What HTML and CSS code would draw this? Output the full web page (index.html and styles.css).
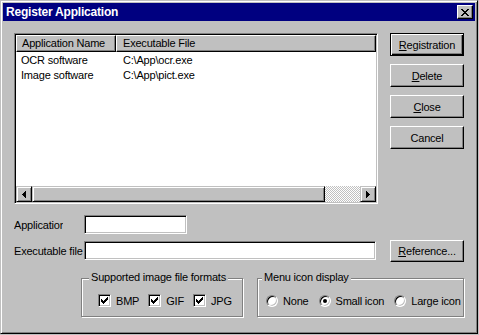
FILE: index.html
```html
<!DOCTYPE html>
<html>
<head>
<meta charset="utf-8">
<link rel="stylesheet" href="styles.css">
</head>
<body>
<div class="window">
  <div class="titlebar">
    <span class="title">Register Application</span>
    <button class="close-btn"><svg width="8" height="7" viewBox="0 0 8 7" shape-rendering="crispEdges"><path d="M0 0h2v1H0z M6 0h2v1H6z M1 1h2v1H1z M5 1h2v1H5z M2 2h4v1H2z M3 3h2v1H3z M2 4h4v1H2z M1 5h2v1H1z M5 5h2v1H5z M0 6h2v1H0z M6 6h2v1H6z" fill="#000"/></svg></button>
  </div>
  <div class="content">
    <div class="top-row">
      <div class="listview">
        <div class="lv-header">
          <div class="lv-col col-name">Application Name</div>
          <div class="lv-col col-file">Executable File</div>
        </div>
        <div class="lv-body">
          <div class="lv-row"><span class="cell-name">OCR software</span><span class="cell-file">C:\App\ocr.exe</span></div>
          <div class="lv-row"><span class="cell-name">Image software</span><span class="cell-file">C:\App\pict.exe</span></div>
        </div>
        <div class="hscroll">
          <div class="sb-btn"><svg width="4" height="7" viewBox="0 0 4 7" shape-rendering="crispEdges"><path d="M3 0h1v7H3z M2 1h1v5H2z M1 2h1v3H1z M0 3h1v1H0z" fill="#000"/></svg></div>
          <div class="sb-thumb"></div>
          <div class="sb-track"><svg width="100%" height="100%"><defs><pattern id="chk" width="2" height="2" patternUnits="userSpaceOnUse"><rect width="2" height="2" fill="#c0c0c0"/><rect width="1" height="1" fill="#fff"/><rect x="1" y="1" width="1" height="1" fill="#fff"/></pattern></defs><rect width="100%" height="100%" fill="url(#chk)"/></svg></div>
          <div class="sb-btn"><svg width="4" height="7" viewBox="0 0 4 7" shape-rendering="crispEdges"><path d="M0 0h1v7H0z M1 1h1v5H1z M2 2h1v3H2z M3 3h1v1H3z" fill="#000"/></svg></div>
        </div>
      </div>
      <div class="side-buttons">
        <button class="btn default"><u>R</u>egistration</button>
        <button class="btn"><u>D</u>elete</button>
        <button class="btn"><u>C</u>lose</button>
        <button class="btn">Cancel</button>
      </div>
    </div>
    <div class="form-row row-app">
      <span class="field-label label-clip">Application</span>
      <div class="field field-app"></div>
    </div>
    <div class="form-row row-exec">
      <span class="field-label">Executable file</span>
      <div class="field field-exec"></div>
      <button class="btn btn-ref"><u>R</u>eference...</button>
    </div>
    <div class="groups">
      <div class="group group-formats">
        <span class="group-label">Supported image file formats</span>
        <div class="options">
          <span class="opt"><span class="checkbox"><svg width="7" height="7" viewBox="0 0 7 7" shape-rendering="crispEdges"><path d="M6 0h1v1H6z M5 1h2v1H5z M0 2h1v1H0z M4 2h3v1H4z M0 3h2v1H0z M3 3h3v1H3z M0 4h5v1H0z M1 5h3v1H1z M2 6h1v1H2z" fill="#000"/></svg></span>BMP</span>
          <span class="opt"><span class="checkbox"><svg width="7" height="7" viewBox="0 0 7 7" shape-rendering="crispEdges"><path d="M6 0h1v1H6z M5 1h2v1H5z M0 2h1v1H0z M4 2h3v1H4z M0 3h2v1H0z M3 3h3v1H3z M0 4h5v1H0z M1 5h3v1H1z M2 6h1v1H2z" fill="#000"/></svg></span>GIF</span>
          <span class="opt"><span class="checkbox"><svg width="7" height="7" viewBox="0 0 7 7" shape-rendering="crispEdges"><path d="M6 0h1v1H6z M5 1h2v1H5z M0 2h1v1H0z M4 2h3v1H4z M0 3h2v1H0z M3 3h3v1H3z M0 4h5v1H0z M1 5h3v1H1z M2 6h1v1H2z" fill="#000"/></svg></span>JPG</span>
        </div>
      </div>
      <div class="group group-icons">
        <span class="group-label">Menu icon display</span>
        <div class="options">
          <span class="opt"><span class="radio"></span>None</span>
          <span class="opt"><span class="radio checked"></span>Small icon</span>
          <span class="opt"><span class="radio"></span>Large icon</span>
        </div>
      </div>
    </div>
  </div>
</div>
</body>
</html>
```
FILE: styles.css
```css
body {
  margin: 0;
  background: #c0c0c0;
  font-family: "Liberation Sans", Arial, sans-serif;
  font-size: 11px;
  letter-spacing: -0.2px;
  color: #000;
}

.window {
  width: 478px;
  height: 334px;
  box-sizing: border-box;
  border: 1px solid;
  border-color: #c0c0c0 #000 #000 #c0c0c0;
  box-shadow: inset 1px 1px #fff, inset -1px -1px #808080;
  padding: 2px;
}

.titlebar {
  height: 18px;
  background: #000080;
  color: #fff;
  display: flex;
  align-items: center;
  justify-content: space-between;
  padding: 0 2px 0 3px;
  font-weight: bold;
  font-size: 12px;
}

.close-btn {
  width: 16px;
  height: 14px;
  box-sizing: border-box;
  padding: 0;
  background: #c0c0c0;
  border: 1px solid;
  border-color: #fff #000 #000 #fff;
  box-shadow: inset -1px -1px #808080;
  display: flex;
  align-items: center;
  justify-content: center;
}

.content {
  padding: 12px 0 0 11px;
}

.top-row {
  display: flex;
  gap: 12px;
  align-items: flex-start;
}

.listview {
  width: 364px;
  height: 171px;
  box-sizing: border-box;
  display: flex;
  flex-direction: column;
  background: #fff;
  border: 1px solid;
  border-color: #808080 #fff #fff #808080;
  box-shadow: inset 1px 1px #000, inset -1px -1px #c0c0c0;
  padding: 1px;
}

.lv-header {
  display: flex;
  height: 17px;
  flex: none;
}

.lv-col {
  box-sizing: border-box;
  border: 1px solid;
  border-color: #fff #000 #000 #fff;
  box-shadow: inset -1px -1px #808080;
  background: #c0c0c0;
  line-height: 15px;
  white-space: nowrap;
}

.lv-col.col-name {
  width: 100px;
  padding-left: 5px;
}

.lv-col.col-file {
  flex: 1;
  padding-left: 6px;
}

.lv-body {
  flex: 1;
  padding-top: 1px;
}

.lv-row {
  display: flex;
  height: 15px;
  line-height: 15px;
  white-space: nowrap;
}

.cell-name {
  width: 100px;
  box-sizing: border-box;
  padding-left: 5px;
}

.cell-file {
  padding-left: 7px;
}

.hscroll {
  display: flex;
  height: 16px;
  flex: none;
}

.sb-btn,
.sb-thumb {
  height: 16px;
  box-sizing: border-box;
  border: 1px solid;
  border-color: #c0c0c0 #000 #000 #c0c0c0;
  box-shadow: inset 1px 1px #fff, inset -1px -1px #808080;
  background: #c0c0c0;
}

.sb-btn {
  width: 16px;
  display: flex;
  align-items: center;
  justify-content: center;
}

.sb-btn svg {
  display: block;
}

.sb-thumb {
  width: 293px;
}

.sb-track {
  flex: 1;
  height: 16px;
}

.sb-track svg {
  display: block;
}

.side-buttons {
  display: flex;
  flex-direction: column;
  gap: 8px;
}

.btn {
  width: 74px;
  height: 23px;
  box-sizing: border-box;
  padding: 0;
  font: inherit;
  letter-spacing: inherit;
  color: #000;
  background: #c0c0c0;
  border: 1px solid;
  border-color: #fff #000 #000 #fff;
  box-shadow: inset -1px -1px #808080;
}

.btn.default {
  border-color: #000;
  box-shadow: inset 1px 1px #fff, inset -1px -1px #000, inset -2px -2px #808080;
}

.btn u {
  text-decoration: underline;
}

.form-row {
  display: flex;
  align-items: center;
}

.row-app {
  margin-top: 11px;
}

.row-exec {
  margin-top: 6px;
  align-items: flex-start;
}

.field-label {
  width: 70px;
  white-space: nowrap;
  overflow: hidden;
  flex: none;
}

.row-exec .field-label {
  align-self: center;
}

.label-clip {
  width: 49px;
  margin-right: 21px;
}

.field {
  height: 19px;
  box-sizing: border-box;
  background: #fff;
  border: 1px solid;
  border-color: #808080 #fff #fff #808080;
  box-shadow: inset 1px 1px #000, inset -1px -1px #c0c0c0;
  flex: none;
}

.field-app {
  width: 103px;
}

.field-exec {
  width: 292px;
  margin-top: 1px;
  margin-right: 14px;
}

.btn-ref {
  height: 22px;
}

.groups {
  display: flex;
  margin-top: 16px;
  margin-left: 67px;
}

.group {
  position: relative;
  height: 39px;
  box-sizing: border-box;
  border: 1px solid #808080;
  box-shadow: inset 1px 1px #fff, 1px 1px #fff;
}

.group-label {
  position: absolute;
  top: -8px;
  line-height: 13px;
  padding: 0 2px;
  background: #c0c0c0;
  white-space: nowrap;
}

.group-formats {
  width: 162px;
}

.group-formats .group-label {
  left: 7px;
}

.group-icons {
  width: 207px;
  margin-left: 14px;
}

.group-icons .group-label {
  left: 4px;
}

.options {
  display: flex;
  align-items: center;
  height: 13px;
  margin-top: 15px;
  white-space: nowrap;
}

.group-formats .options {
  padding-left: 16px;
  gap: 9px;
}

.group-icons .options {
  padding-left: 8px;
  gap: 10px;
}

.opt {
  display: flex;
  align-items: center;
  gap: 5px;
}

.checkbox {
  width: 13px;
  height: 13px;
  box-sizing: border-box;
  background: #fff;
  border: 1px solid;
  border-color: #808080 #fff #fff #808080;
  box-shadow: inset 1px 1px #000, inset -1px -1px #c0c0c0;
  display: flex;
  align-items: center;
  justify-content: center;
}

.checkbox svg {
  display: block;
}

.radio {
  width: 12px;
  height: 12px;
  box-sizing: border-box;
  border-radius: 50%;
  background: #fff;
  border: 1px solid;
  border-color: #808080 #fff #fff #808080;
  box-shadow: inset 1px 1px #000, inset -1px -1px #c0c0c0;
  display: flex;
  align-items: center;
  justify-content: center;
}

.radio.checked::after {
  content: "";
  width: 4px;
  height: 4px;
  border-radius: 50%;
  background: #000;
}
```
